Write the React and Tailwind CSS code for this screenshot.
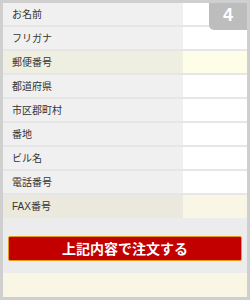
const FIELDS = [
  { label: "お名前" },
  { label: "フリガナ" },
  { label: "郵便番号", hl: true },
  { label: "都道府県" },
  { label: "市区郡町村" },
  { label: "番地" },
  { label: "ビル名" },
  { label: "電話番号" },
];

export default function App() {
  return (
    <div
      className="relative w-[250px] h-[300px] border-[3px] border-[#cfcfcf] bg-[#faf6e6] overflow-hidden"
      style={{ fontFamily: '"Liberation Sans", "Noto Sans CJK JP", sans-serif' }}
    >
      <div className="flex flex-col">
        {FIELDS.map((f) => (
          <div key={f.label} className="flex h-[24px] border-b-2 border-[#e6e6e6]">
            <div
              className={
                f.hl
                  ? "w-[180px] bg-[#efefe1] flex items-center pl-[9px] text-[10px] text-[#333]"
                  : "w-[180px] bg-[#f0f0f0] flex items-center pl-[9px] text-[10px] text-[#333]"
              }
            >
              {f.label}
            </div>
            <div className={f.hl ? "flex-1 bg-[#fefee8]" : "flex-1 bg-white"} />
          </div>
        ))}
        <div className="flex h-[23px]">
          <div className="w-[180px] bg-[#ebe9dd] flex items-center pl-[9px] text-[10px] text-[#333]">
            FAX番号
          </div>
          <div className="flex-1" />
        </div>
        <div className="bg-[#ececec] h-[55px] pt-[18px] px-[5px]">
          <button className="w-full h-[25px] rounded-[2px] border border-[#e39a1c] bg-[#c20000] text-white text-[14px] font-bold leading-none">
            上記内容で注文する
          </button>
        </div>
      </div>
      <div className="absolute top-[-3px] right-0 w-[38px] h-[30px] bg-[#bdbdbd] rounded-bl-[5px] flex items-center justify-center text-white text-[18px] font-bold">
        4
      </div>
    </div>
  );
}
